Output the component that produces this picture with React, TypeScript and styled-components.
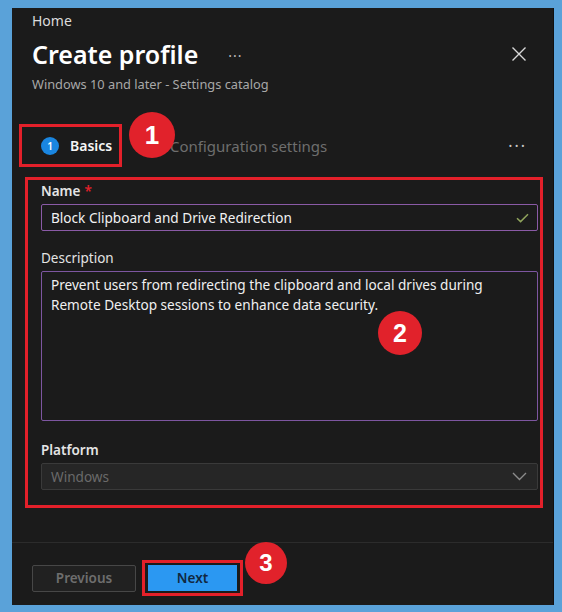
import React from "react";
import styled, { createGlobalStyle } from "styled-components";

const Global = createGlobalStyle`
  html, body { margin: 0; padding: 0; }
  body {
    background: #5aa2d9;
    font-family: "Noto Sans", "Open Sans", sans-serif;
    width: 562px;
    height: 612px;
    overflow: hidden;
  }
`;

const Panel = styled.div`
  position: relative;
  box-sizing: border-box;
  margin: 8px 0 0 12px;
  width: 542px;
  height: 597px;
  background: #1b1b1b;
  border-right: 1px solid #101010;
  display: flex;
  flex-direction: column;
  color: #f0f0f0;
`;

const Header = styled.div`
  padding: 3px 20px 0 20px;
  display: flex;
  flex-direction: column;
`;

const Crumb = styled.div`
  font-size: 14px;
  line-height: 20px;
  color: #dcdcdc;
`;

const TitleRow = styled.div`
  display: flex;
  align-items: center;
  margin-top: 6px;
  height: 34px;
`;

const Title = styled.h1`
  margin: 0;
  font-size: 25px;
  font-weight: 600;
  line-height: 34px;
  color: #ffffff;
`;

const TitleDots = styled.span`
  margin-left: 30px;
  font-size: 14px;
  color: #bdbdbd;
  letter-spacing: 1px;
  margin-top: 2px;
`;

const CloseBtn = styled.div`
  margin-left: auto;
  margin-right: 6px;
  width: 16px;
  height: 16px;
  display: flex;
`;

const Subtitle = styled.div`
  font-size: 12.8px;
  line-height: 18px;
  color: #a8a8a8;
  margin-top: 4px;
`;

const TabsRow = styled.div`
  display: flex;
  align-items: center;
  margin-top: 31px;
  padding: 0 26px 0 7px;
`;

const HighlightTab = styled.div`
  box-sizing: border-box;
  height: 43px;
  width: 103px;
  border: 3px solid #e3202a;
  display: flex;
  align-items: center;
  padding-left: 19px;
  gap: 11px;
`;

const StepDot = styled.span`
  width: 18px;
  height: 18px;
  border-radius: 50%;
  background: #1a86e0;
  color: #fff;
  font-size: 10px;
  font-weight: 600;
  display: flex;
  align-items: center;
  justify-content: center;
`;

const TabLabel = styled.span<{ $active?: boolean }>`
  font-size: 14px;
  font-weight: ${(p) => (p.$active ? 600 : 400)};
  color: ${(p) => (p.$active ? "#f5f5f5" : "#6e6e6e")};
  line-height: 20px;
`;

const ConfigTab = styled(TabLabel)`
  margin-left: 48px;
  font-size: 15px;
`;

const MoreDots = styled.span`
  margin-left: auto;
  font-size: 16px;
  letter-spacing: 2px;
  color: #c8c8c8;
`;

const FormBox = styled.div`
  box-sizing: border-box;
  margin: 10px 10px 0 13px;
  height: 331px;
  border: 3px solid #e3202a;
  padding: 2px 2px 0 13px;
  display: flex;
  flex-direction: column;
`;

const Label = styled.div<{ $strong?: boolean }>`
  font-size: 13.5px;
  line-height: 18px;
  font-weight: ${(p) => (p.$strong ? 600 : 400)};
  color: #e4e4e4;
`;

const Req = styled.span`
  color: #e3202a;
  margin-left: 4px;
`;

const Field = styled.div<{ $gap?: number }>`
  margin-top: ${(p) => p.$gap ?? 0}px;
  display: flex;
  flex-direction: column;
  gap: 4px;
`;

const InputBox = styled.div`
  box-sizing: border-box;
  height: 27px;
  border: 1px solid #8a5aa6;
  border-radius: 2px;
  display: flex;
  align-items: center;
  padding: 0 8px 0 9px;
  font-size: 13.6px;
  color: #f2f2f2;
`;

const Check = styled.span`
  margin-left: auto;
  display: flex;
`;

const TextArea = styled.div`
  box-sizing: border-box;
  height: 150px;
  border: 1px solid #7d56a0;
  border-radius: 2px;
  padding: 3px 9px;
  font-size: 13.6px;
  line-height: 20px;
  color: #f0f0f0;
`;

const SelectBox = styled.div`
  box-sizing: border-box;
  height: 27px;
  border: 1px solid #3a3a3a;
  background: #262626;
  border-radius: 2px;
  display: flex;
  align-items: center;
  padding: 0 10px 0 9px;
  font-size: 13.6px;
  color: #6a6a6a;
`;

const Footer = styled.div`
  margin-top: auto;
  border-top: 1px solid #2c2c2c;
  height: 63px;
  box-sizing: border-box;
  display: flex;
  align-items: center;
  padding: 8px 0 0 20px;
  gap: 6px;
`;

const GhostButton = styled.div`
  box-sizing: border-box;
  width: 104px;
  height: 27px;
  border: 1px solid #474747;
  border-radius: 2px;
  background: #212121;
  color: #6e6e6e;
  font-size: 13.5px;
  font-weight: 600;
  display: flex;
  align-items: center;
  justify-content: center;
`;

const HighlightWrap = styled.div`
  box-sizing: border-box;
  border: 3px solid #e3202a;
  padding: 2px 3px;
  display: flex;
`;

const PrimaryButton = styled.div`
  width: 89px;
  height: 26px;
  background: #2b98f2;
  color: #112840;
  font-size: 13.5px;
  font-weight: 600;
  display: flex;
  align-items: center;
  justify-content: center;
`;

const Badge = styled.div<{ $x: number; $y: number; $r: number }>`
  position: absolute;
  left: ${(p) => p.$x - p.$r}px;
  top: ${(p) => p.$y - p.$r}px;
  width: ${(p) => p.$r * 2}px;
  height: ${(p) => p.$r * 2}px;
  border-radius: 50%;
  background: #e1222b;
  color: #ffffff;
  font-family: "Liberation Sans", Arial, sans-serif;
  font-weight: 700;
  font-size: ${(p) => Math.round(p.$r * 1.15)}px;
  display: flex;
  align-items: center;
  justify-content: center;
`;

export default function App() {
  return (
    <>
      <Global />
      <Panel>
        <Header>
          <Crumb>Home</Crumb>
          <TitleRow>
            <Title>Create profile</Title>
            <TitleDots>···</TitleDots>
            <CloseBtn>
              <svg width="16" height="16" viewBox="0 0 16 16">
                <path d="M1.5 1.5 L14.5 14.5 M14.5 1.5 L1.5 14.5" stroke="#d8d8d8" strokeWidth="1.4" fill="none" />
              </svg>
            </CloseBtn>
          </TitleRow>
          <Subtitle>Windows 10 and later - Settings catalog</Subtitle>
        </Header>

        <TabsRow>
          <HighlightTab>
            <StepDot>1</StepDot>
            <TabLabel $active>Basics</TabLabel>
          </HighlightTab>
          <ConfigTab>Configuration settings</ConfigTab>
          <MoreDots>···</MoreDots>
        </TabsRow>

        <FormBox>
          <Field>
            <Label $strong>
              Name<Req>*</Req>
            </Label>
            <InputBox>
              Block Clipboard and Drive Redirection
              <Check>
                <svg width="13" height="10" viewBox="0 0 13 10">
                  <path d="M1 5.2 L4.6 8.6 L12 1.2" stroke="#8fa35c" strokeWidth="1.5" fill="none" />
                </svg>
              </Check>
            </InputBox>
          </Field>
          <Field $gap={18}>
            <Label>Description</Label>
            <TextArea>
              Prevent users from redirecting the clipboard and local drives during
              <br />
              Remote Desktop sessions to enhance data security.
            </TextArea>
          </Field>
          <Field $gap={20}>
            <Label $strong>Platform</Label>
            <SelectBox>
              Windows
              <Check>
                <svg width="15" height="9" viewBox="0 0 15 9">
                  <path d="M1 1 L7.5 7.5 L14 1" stroke="#8c8c8c" strokeWidth="1.4" fill="none" />
                </svg>
              </Check>
            </SelectBox>
          </Field>
        </FormBox>

        <Footer>
          <GhostButton>Previous</GhostButton>
          <HighlightWrap>
            <PrimaryButton>Next</PrimaryButton>
          </HighlightWrap>
        </Footer>

        <Badge $x={140} $y={127} $r={23}>1</Badge>
        <Badge $x={388} $y={325} $r={22}>2</Badge>
        <Badge $x={254} $y={555} $r={21}>3</Badge>
      </Panel>
    </>
  );
}
